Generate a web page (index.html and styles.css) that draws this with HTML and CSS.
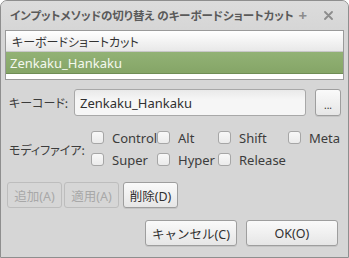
FILE: index.html
```html
<!DOCTYPE html>
<html lang="ja">
<head>
<meta charset="utf-8">
<link rel="stylesheet" href="styles.css">
</head>
<body>
<div class="window">
  <div class="titlebar">
    <span class="title">インプットメソッドの切り替え のキーボードショートカット</span>
    <span class="tb-btn plus">+</span>
    <span class="tb-btn close">
      <svg width="9" height="9" viewBox="0 0 9 9"><path d="M1 1L8 8M8 1L1 8" stroke="#8c8c8c" stroke-width="1.8" stroke-linecap="round"/></svg>
    </span>
  </div>
  <div class="list">
    <div class="list-header">キーボードショートカット</div>
    <div class="list-row selected">Zenkaku_Hankaku</div>
    <div class="list-empty"></div>
  </div>
  <div class="keyrow">
    <span class="label jp">キーコード:</span>
    <div class="input">Zenkaku_Hankaku</div>
    <div class="btn dots">...</div>
  </div>
  <div class="modrow">
    <span class="label jp mod-label">モディファイア:</span>
    <div class="mods">
      <label class="chk"><span class="box"></span>Control</label>
      <label class="chk"><span class="box"></span>Alt</label>
      <label class="chk"><span class="box"></span>Shift</label>
      <label class="chk"><span class="box"></span>Meta</label>
      <label class="chk"><span class="box"></span>Super</label>
      <label class="chk"><span class="box"></span>Hyper</label>
      <label class="chk"><span class="box"></span>Release</label>
    </div>
  </div>
  <div class="actions">
    <div class="btn small disabled">追加(A)</div>
    <div class="btn small disabled">適用(A)</div>
    <div class="btn small del">削除(D)</div>
  </div>
  <div class="footer">
    <div class="btn big">キャンセル(C)</div>
    <div class="btn big">OK(O)</div>
  </div>
</div>
</body>
</html>
```

FILE: styles.css
```css
* { box-sizing: border-box; }
html, body { margin: 0; padding: 0; background: #ffffff; }
body {
  font-family: "Noto Sans", "Noto Sans CJK JP", sans-serif;
  font-size: 13px;
  color: #3c3c3c;
}
.window {
  width: 349px;
  height: 258px;
  background: #d6d6d6;
  border: 1px solid #8e8e8e;
  border-radius: 7px 7px 0 0;
  display: flex;
  flex-direction: column;
  overflow: hidden;
}
.titlebar {
  height: 28px;
  display: flex;
  align-items: center;
  padding-left: 9px;
  background: linear-gradient(#dcdcdc, #d6d6d6);
}
.title {
  font-family: "Noto Sans CJK JP", sans-serif;
  font-feature-settings: "palt";
  font-weight: bold;
  font-size: 11.5px;
  color: #5a5a5a;
  white-space: nowrap;
}
.tb-btn { color: #8c8c8c; font-weight: bold; display: flex; align-items: center; }
.plus { margin-left: 5px; font-size: 15px; }
.close { margin-left: 17px; }
.list {
  margin: 1px 4px 0 4px;
  border: 1px solid #9a9a9a;
  background: #fff;
  display: flex;
  flex-direction: column;
}
.list-header {
  height: 21px;
  padding-left: 6px;
  display: flex;
  align-items: center;
  background: linear-gradient(#ffffff, #e8e8e8);
  border-bottom: 1px solid #c8c8c8;
  font-family: "Noto Sans CJK JP", sans-serif;
  font-feature-settings: "palt";
  font-size: 12px;
  color: #333;
}
.list-row {
  height: 22px;
  padding-left: 4px;
  display: flex;
  align-items: center;
}
.selected {
  background: linear-gradient(#92b275, #85a567);
  color: #f4f8ef;
  border-bottom: 1px solid #6f8d55;
}
.list-empty { height: 5px; background: #fff; }
.keyrow {
  margin-top: 9px;
  height: 27px;
  display: flex;
  align-items: center;
  padding-left: 8px;
}
.label {
  font-family: "Noto Sans CJK JP", sans-serif;
  font-feature-settings: "palt";
  font-size: 12px;
  color: #3c3c3c;
}
.keyrow .label { width: 65px; }
.input {
  width: 232px;
  height: 27px;
  border: 1px solid #a8a8a8;
  border-radius: 3px;
  background: linear-gradient(#e9e9e9, #f6f6f6 40%, #f6f6f6);
  display: flex;
  align-items: center;
  padding-left: 5px;
  color: #303030;
}
.btn {
  border: 1px solid #9e9e9e;
  border-radius: 3px;
  background: linear-gradient(#fafafa, #e6e6e6);
  display: flex;
  align-items: center;
  justify-content: center;
  font-family: "Noto Sans", "Noto Sans CJK JP", sans-serif;
  font-size: 12.5px;
  color: #303030;
  height: 27px;
  box-shadow: 0 1px 0 rgba(0,0,0,0.08);
}
.dots { width: 26px; margin-left: 9px; font-size: 10px; padding-top: 4px; }
.modrow {
  margin-top: 15px;
  display: flex;
  align-items: center;
  padding-left: 8px;
}
.mod-label { width: 82px; padding-top: 2px; }
.mods {
  display: grid;
  grid-template-columns: 66px 61px 70px auto;
  row-gap: 9px;
}
.chk {
  display: flex;
  align-items: center;
  height: 13px;
  font-size: 13px;
  color: #3c3c3c;
  white-space: nowrap;
}
.box {
  width: 13px;
  height: 13px;
  border: 1px solid #a6a6a6;
  border-radius: 3px;
  background: linear-gradient(#f8f8f8, #ebebeb);
  margin-right: 8px;
  flex: none;
}
.actions {
  margin-top: 16px;
  padding-left: 6px;
  display: flex;
  gap: 2px;
}
.small { width: 55px; height: 26px; }
.disabled {
  color: #a8a8a8;
  border-color: #bdbdbd;
  background: #d6d6d6;
  box-shadow: none;
}
.del { margin-left: 2px; }
.footer {
  margin-top: 12px;
  display: flex;
  justify-content: flex-end;
  gap: 9px;
  padding-right: 10px;
}
.big { width: 92px; height: 26px; }
```
